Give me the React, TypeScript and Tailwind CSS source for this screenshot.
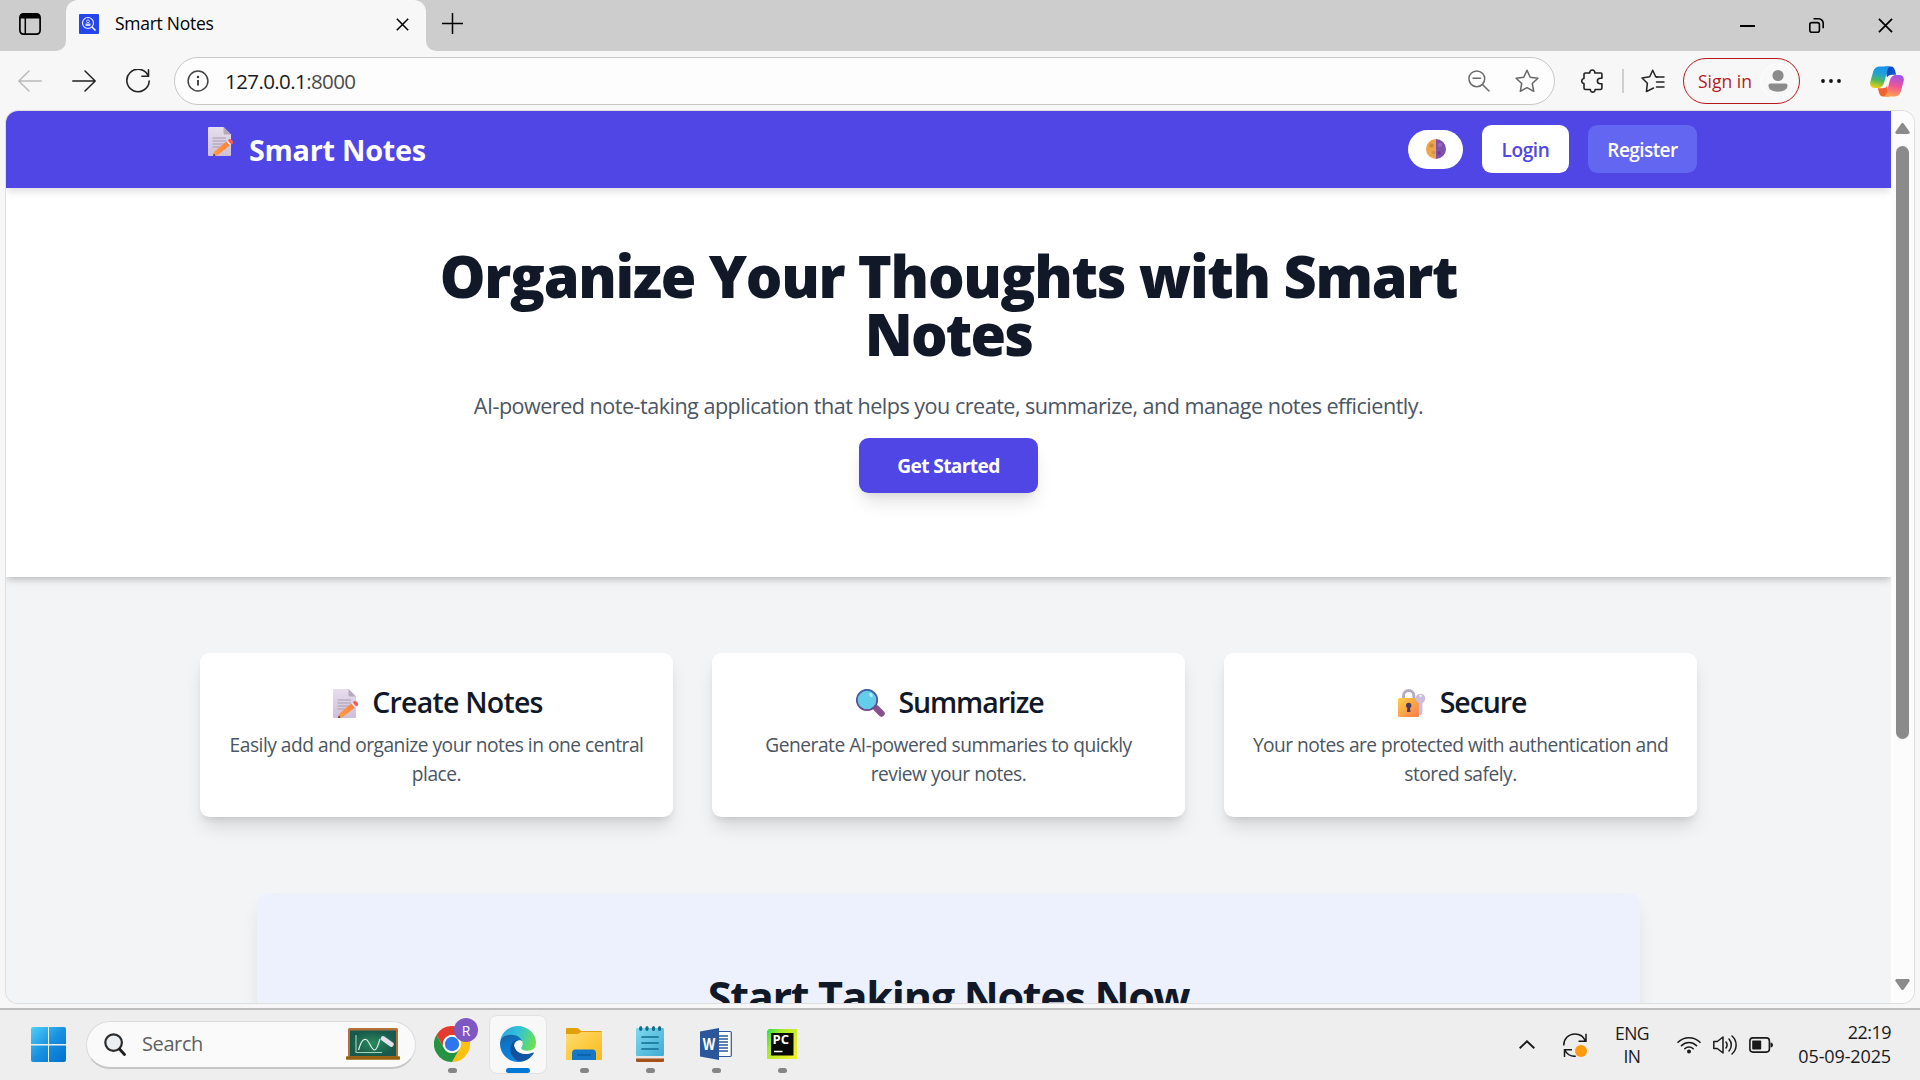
import type { ReactNode } from "react";

type IconProps = { className?: string };

/* ---------- Emoji drawings ---------- */

function MemoEmoji({ className }: IconProps) {
  return (
    <svg viewBox="0 0 26 29" className={className}>
      <defs>
        <linearGradient id="memoPaper" x1="0" y1="0" x2="0" y2="1">
          <stop offset="0" stopColor="#e6dfee" />
          <stop offset="1" stopColor="#cdbfd8" />
        </linearGradient>
        <linearGradient id="memoPencil" x1="1" y1="0" x2="0" y2="1">
          <stop offset="0" stopColor="#ff7d3c" />
          <stop offset="1" stopColor="#ffa044" />
        </linearGradient>
      </defs>
      <path d="M1 0h14.500L23 7.500V28a1 1 0 0 1-1 1H1a1 1 0 0 1-1-1V1a1 1 0 0 1 1-1z" fill="url(#memoPaper)" />
      <path d="M15.500 0 23 7.500h-6a1.500 1.500 0 0 1-1.500-1.500z" fill="#b5a9bb" />
      <path d="M4.500 11h13.500M4.500 14h13.500M4.500 17h12M4.500 20h8" stroke="#a79daf" strokeWidth="1" />
      <path d="m5 29 1.500-4.500L18.300 14.600l3.600 4L9.500 28.300z" fill="url(#memoPencil)" />
      <path d="m18.300 14.600 1.500-1.200 3.500 4-1.400 1.200z" fill="#f3e6ee" />
      <path d="m19.800 13.400 1.400-1.100c1.600-1.200 5 2.300 3.600 3.900l-1.500 1.200z" fill="#fa5a50" />
      <path d="m5 29 .8-2.500 1.800 1.900z" fill="#4d2f4a" />
    </svg>
  );
}

function MagnifierEmoji({ className }: IconProps) {
  return (
    <svg viewBox="0 0 29 28" className={className}>
      <defs>
        <linearGradient id="lensRim" x1="0" y1="0" x2="0" y2="1">
          <stop offset="0" stopColor="#3f62a8" />
          <stop offset="1" stopColor="#6d4586" />
        </linearGradient>
      </defs>
      <path d="m16 16 4 4" stroke="#6d4586" strokeWidth="2.500" />
      <path d="m20.500 19.500 5 5" stroke="#88508d" strokeWidth="6.400" strokeLinecap="round" />
      <circle cx="11" cy="11" r="10.200" fill="#63cdea" stroke="url(#lensRim)" strokeWidth="1.800" />
      <ellipse cx="15" cy="6" rx="1.600" ry="2.200" fill="#b5e9f8" transform="rotate(-30 15 6)" />
    </svg>
  );
}

function LockEmoji({ className }: IconProps) {
  return (
    <svg viewBox="0 0 28 28" className={className}>
      <defs>
        <linearGradient id="lockBody" x1="0" y1="0" x2="1" y2="1">
          <stop offset="0" stopColor="#ffcf45" />
          <stop offset="1" stopColor="#fb7b4c" />
        </linearGradient>
      </defs>
      <path d="M5.500 11V6.700a5.200 5.200 0 0 1 10.400 0V11" fill="none" stroke="#b5acc2" strokeWidth="3" />
      <rect x="0" y="9" width="21" height="19" rx="1.500" fill="url(#lockBody)" />
      <circle cx="22.500" cy="9.500" r="4.800" fill="#cbbddb" />
      <circle cx="22.500" cy="6.800" r="1.100" fill="#fff" />
      <path d="M20.800 13h3.600v12l-2 1.500-1.600-1.500z" fill="#cbbddb" />
      <circle cx="10.700" cy="16.500" r="2.700" fill="#4b3a5c" />
      <path d="M9.600 17h2.200l.7 6H8.900z" fill="#4b3a5c" />
    </svg>
  );
}

function HalfMoon({ className }: IconProps) {
  return (
    <svg viewBox="0 0 20 20" className={className}>
      <path d="M10 0a10 10 0 0 0 0 20z" fill="#eda54a" />
      <path d="M10 0a10 10 0 0 1 0 20z" fill="#8050ae" />
      <circle cx="5.500" cy="6.500" r="2.200" fill="#cf8a43" />
      <circle cx="7.500" cy="13.500" r="1.800" fill="#d8904a" />
      <circle cx="14" cy="6" r="2" fill="#9868c4" />
      <circle cx="13" cy="14" r="1.700" fill="#693e98" />
    </svg>
  );
}

/* ---------- Browser icons ---------- */

function TabActionsIcon() {
  return (
    <svg viewBox="0 0 22 22" className="size-[22px]">
      <rect x=".9" y=".9" width="20.200" height="20.200" rx="3.500" fill="none" stroke="#000" strokeWidth="1.700" />
      <path d="M1 5.500V4a3 3 0 0 1 3-3h14a3 3 0 0 1 3 3v1.500z" />
      <path d="M6.300 5v16" stroke="#000" strokeWidth="1.500" />
    </svg>
  );
}

function Favicon() {
  return (
    <svg viewBox="0 0 20 20" className="size-5">
      <rect width="20" height="20" rx="1" fill="#2446ea" />
      <circle cx="9" cy="9" r="5.500" fill="none" stroke="#e7ecff" strokeWidth="1.200" />
      <path d="m13 13 3.500 3.500" stroke="#fff" strokeWidth="1.600" />
      <circle cx="9" cy="7.300" r="1.400" fill="none" stroke="#cdd8ff" />
      <path d="M6.500 9.500h5v2.500h-5z" fill="#cdd8ff" />
    </svg>
  );
}

function XIcon({ className }: IconProps) {
  return (
    <svg viewBox="0 0 16 16" className={className}>
      <path d="m1 1 14 14M15 1 1 15" stroke="#000" strokeWidth="1.900" />
    </svg>
  );
}

function ArrowIcon({ className }: IconProps) {
  return (
    <svg viewBox="0 0 24 22" className={className} fill="none" stroke="currentColor" strokeWidth="1.500" strokeLinecap="round" strokeLinejoin="round">
      <path d="M.8 11h22.400M13 1l10.200 10L13 21" />
    </svg>
  );
}

function ReloadIcon() {
  return (
    <svg viewBox="0 0 24 24" className="size-6" fill="none" stroke="#222" strokeWidth="1.600" strokeLinecap="round">
      <path d="M22.300 7A11.200 11.200 0 1 0 23.200 12" />
      <path d="M22.500.9v6.300h-6.600" />
    </svg>
  );
}

function InfoIcon() {
  return (
    <svg viewBox="0 0 22 22" className="size-[22px]">
      <circle cx="11" cy="11" r="9.900" fill="none" stroke="#444" strokeWidth="1.500" />
      <path d="M11 10v5.500" stroke="#333" strokeWidth="1.800" />
      <circle cx="11" cy="7" r="1.200" fill="#333" />
    </svg>
  );
}

function ZoomOutIcon() {
  return (
    <svg viewBox="0 0 22 22" className="size-[22px]" fill="none" stroke="#6b6b6b" strokeWidth="1.500" strokeLinecap="round">
      <circle cx="8.800" cy="8.800" r="7.900" />
      <path d="m14.500 14.500 6.500 6.500M5 8.300h7.500" />
    </svg>
  );
}

function StarIcon() {
  return (
    <svg viewBox="0 0 24 24" className="size-6" fill="none" stroke="#666" strokeWidth="1.500" strokeLinejoin="round">
      <path d="m12 1.200 3.200 7 7.700 1-5.600 5.300 1.400 7.800L12 18.600l-6.700 3.700 1.400-7.800L1.100 9.200l7.700-1z" />
    </svg>
  );
}

function PuzzleIcon() {
  return (
    <svg viewBox="0 0 22 24" className="h-6 w-[22px]" fill="none" stroke="#222" strokeWidth="1.600" strokeLinejoin="round">
      <path d="M4.500 4h4.300c-.4-4 5.400-4 5 0h6.100a1 1 0 0 1 1 1v4.300h-1.500c-4 0-4 5.400 0 5.400h1.500V19a1.500 1.500 0 0 1-1.500 1.500h-5.300c.3 3.500-5 3.500-4.700 0h-5A1.500 1.500 0 0 1 3 19v-4.400c-3-.2-3-5 0-5.100V5.500A1.500 1.500 0 0 1 4.500 4z" />
    </svg>
  );
}

function FavoritesIcon() {
  return (
    <svg viewBox="0 0 24 24" className="size-6" fill="none" stroke="#222" strokeWidth="1.500" strokeLinejoin="round" strokeLinecap="round">
      <path d="M16.500 7.900 14.700 7.700 11.700 1.200 8.700 7.700 1 9l5.400 5.200-1 8.400 7.100-3.600" />
      <path d="M15.500 7.900H23M15.500 13H23M15.500 18H23" />
    </svg>
  );
}

function CopilotIcon() {
  return (
    <svg viewBox="0 0 34 30" className="h-[31px] w-[34px]">
      <defs>
        <linearGradient id="cpA" x1=".5" y1="0" x2=".3" y2="1">
          <stop offset="0" stopColor="#1694f0" />
          <stop offset=".35" stopColor="#22a3d0" />
          <stop offset=".65" stopColor="#52b85e" />
          <stop offset="1" stopColor="#f2d00c" />
        </linearGradient>
        <linearGradient id="cpB" x1=".6" y1="0" x2=".4" y2="1">
          <stop offset="0" stopColor="#a052f0" />
          <stop offset=".5" stopColor="#ee5497" />
          <stop offset="1" stopColor="#ffa04e" />
        </linearGradient>
        <linearGradient id="cpC" x1="0" y1="0" x2="1" y2="1">
          <stop offset="0" stopColor="#0c3db5" />
          <stop offset="1" stopColor="#1c60dc" />
        </linearGradient>
      </defs>
      <path d="M15 0h6c2.500 0 3.400 1.800 4 4l1.200 4.200H22c-2.500 0-4 1-5 3z" fill="url(#cpC)" />
      <path d="M19 30h-6c-2.500 0-3.400-1.800-4-4l-1.200-4.200H12c2.500 0 4-1 5-3z" fill="#f4622f" />
      <path d="M10 0h9.500c-1.500 1.500-2 3.500-2.700 6l-2.600 10c-1 3.500-3 5.500-6.200 5.500H4.500c-3 0-5-2.500-4.200-6L3.200 5C4.200 1.700 6.500 0 10 0z" fill="url(#cpA)" />
      <path d="M24 30h-9.500c1.500-1.500 2-3.500 2.700-6l2.600-10c1-3.500 3-5.500 6.200-5.500h3.500c3 0 5 2.500 4.200 6L30.800 25c-1 3.300-3.300 5-6.800 5z" fill="url(#cpB)" />
      <path d="M18.500 9.500c-1 .8-1.500 2-2 4l-1.200 4.500c-.5 1.800-1 2.600-1.900 3.300h1.800c1.200-.5 1.700-1.500 2.200-3.300l1.300-4.800c.5-1.800 1-2.900 2.300-3.700z" fill="#f7f7f7" />
    </svg>
  );
}

/* ---------- Taskbar icons ---------- */

function WindowsIcon() {
  return (
    <svg viewBox="0 0 35 35" className="size-[35px]">
      <defs>
        <linearGradient id="winBlue" x1="0" y1="0" x2="35" y2="35" gradientUnits="userSpaceOnUse">
          <stop offset="0" stopColor="#4fd0fb" />
          <stop offset=".5" stopColor="#1890e0" />
          <stop offset="1" stopColor="#0270cd" />
        </linearGradient>
      </defs>
      <g fill="url(#winBlue)">
        <path d="M2 0h15v17H0V2a2 2 0 0 1 2-2z" />
        <path d="M18 0h15a2 2 0 0 1 2 2v15H18z" />
        <path d="M0 18.500h17V35H2a2 2 0 0 1-2-2z" />
        <path d="M18 18.500h17V33a2 2 0 0 1-2 2H18z" />
      </g>
    </svg>
  );
}

function SearchIcon() {
  return (
    <svg viewBox="0 0 22 23" className="h-[23px] w-[22px]">
      <circle cx="9.600" cy="9.600" r="8.300" fill="#eceff1" stroke="#2b2b2b" strokeWidth="2.200" />
      <path d="m15.500 16 5 5.500" stroke="#1f1f1f" strokeWidth="2.800" strokeLinecap="round" />
    </svg>
  );
}

function ChalkboardIcon() {
  return (
    <svg viewBox="0 0 54 32" className="h-8 w-[54px]">
      <defs>
        <radialGradient id="chalk">
          <stop offset="0" stopColor="#2b8a5c" />
          <stop offset="1" stopColor="#17594c" />
        </radialGradient>
      </defs>
      <rect x="2" y="0" width="50" height="29" rx="1.500" fill="#b56f3c" />
      <rect x="4" y="2.500" width="46" height="25.500" fill="url(#chalk)" />
      <path d="M10 7v17.500h26" fill="none" stroke="#a6d3bd" strokeWidth="1.100" />
      <path d="M12.500 22c3-10 5-11 7.500-10.500 3.500 1 5 10.500 8.500 10.500 3 0 4-7 5.500-11" fill="none" stroke="#e3f2ea" strokeWidth="1.200" />
      <path d="m37 10.500 8.500 6" stroke="#e4e0ec" strokeWidth="4.600" strokeLinecap="round" />
      <rect x="0" y="28.300" width="54" height="3.400" rx=".8" fill="#96600f" />
    </svg>
  );
}

function ChromeIcon() {
  return (
    <svg viewBox="0 0 36 36" className="size-9">
      <path d="M18 9h15.600A18 18 0 0 0 2.400 9l7.800 13.500A9 9 0 0 1 18 9z" fill="#e33b2e" />
      <path d="M33.600 9H18a9 9 0 0 1 7.800 13.500L18 36A18 18 0 0 0 33.600 9z" fill="#fcc010" />
      <path d="M2.400 9l7.800 13.500a9 9 0 0 0 15.600 0L18 36A18 18 0 0 1 2.400 9z" fill="#259341" />
      <circle cx="18" cy="18" r="9" fill="#fff" />
      <circle cx="18" cy="18" r="7.200" fill="#2d76ec" />
    </svg>
  );
}

function EdgeIcon() {
  return (
    <svg viewBox="0 0 36 36" className="size-9">
      <defs>
        <linearGradient id="edgeTop" x1="0" y1=".3" x2="1" y2=".6">
          <stop offset="0" stopColor="#2aa5e2" />
          <stop offset=".45" stopColor="#33c3d8" />
          <stop offset="1" stopColor="#6be14c" />
        </linearGradient>
        <linearGradient id="edgeLeft" x1=".3" y1="0" x2=".5" y2="1">
          <stop offset="0" stopColor="#16639f" />
          <stop offset=".5" stopColor="#0a7bd4" />
          <stop offset="1" stopColor="#0c86e0" />
        </linearGradient>
        <linearGradient id="edgeNavy" x1="0" y1="0" x2="1" y2="1">
          <stop offset="0" stopColor="#0b4a94" />
          <stop offset="1" stopColor="#155aa5" />
        </linearGradient>
      </defs>
      <path d="M0 18C0 11 5 7.500 11 7.500c7 0 11.500 4.500 11.500 8C20 12.500 14 15 14 20l8 15.500A18 18 0 0 1 0 18z" fill="url(#edgeLeft)" />
      <path d="M15.500 14.200C10 17 9 24 12 29.500c2.200 4.200 6.500 6.500 10.500 6C27.500 34.500 31.500 31 33.700 27.500c.4-.9-.4-1.200-1.200-.8C25 30 14.500 27 14 19.500c0-3 1.500-4.700 3.500-5.300z" fill="url(#edgeNavy)" />
      <path d="M.5 13.800C2.300 5.800 9.300 0 18 0c10 0 18 8 18 16.500C36 22 32.500 24.700 28 24.700c-4 0-6.800-1.200-6.800-2.700 0-1 1.500-1.800 1.500-4.500 0-4.500-5-8.700-11.200-8.700-5 0-9 2-11 5z" fill="url(#edgeTop)" />
    </svg>
  );
}

function FolderIcon() {
  return (
    <svg viewBox="0 0 36 33" className="h-[33px] w-9">
      <defs>
        <linearGradient id="folder" x1="0" y1="0" x2="1" y2="1">
          <stop offset="0" stopColor="#ffdc71" />
          <stop offset="1" stopColor="#fab915" />
        </linearGradient>
      </defs>
      <path d="M1 0h10c2 0 3 3 5 3h19a1 1 0 0 1 1 1v10H0V1a1 1 0 0 1 1-1z" fill="#dfa008" />
      <path d="M0 6h11c2 0 3-2 5-2h20v27a1 1 0 0 1-1 1H1a1 1 0 0 1-1-1z" fill="url(#folder)" />
      <path d="M6 32v-7a3.500 3.500 0 0 1 3.500-3.500h17A3.500 3.500 0 0 1 30 25v7z" fill="#1477c8" />
      <path d="M11 27h14" stroke="#0a559a" strokeWidth="1.200" />
    </svg>
  );
}

function NotepadIcon() {
  return (
    <svg viewBox="0 0 28 36" className="h-9 w-7">
      <defs>
        <linearGradient id="pad" x1="0" y1="0" x2="1" y2="1">
          <stop offset="0" stopColor="#7edaf1" />
          <stop offset="1" stopColor="#41abd2" />
        </linearGradient>
      </defs>
      <rect y="30" width="28" height="6" rx="1.300" fill="#a4511b" />
      <rect y="28" width="28" height="4.500" fill="#e9e6e4" />
      <rect y="2" width="28" height="28" rx="1.300" fill="url(#pad)" />
      <g fill="#156d87">
        <ellipse cx="4.700" cy="2.500" rx="1.700" ry="2.500" />
        <ellipse cx="11" cy="2.500" rx="1.700" ry="2.500" />
        <ellipse cx="17.500" cy="2.500" rx="1.700" ry="2.500" />
        <ellipse cx="23.600" cy="2.500" rx="1.700" ry="2.500" />
      </g>
      <path d="M6 11h16M6 17h16M6 23h16" stroke="#106e91" strokeWidth="1.700" strokeLinecap="round" />
    </svg>
  );
}

function WordIcon() {
  return (
    <svg viewBox="0 0 32 32" className="size-8">
      <rect x="16" y="3.500" width="15.300" height="25" rx="1.200" fill="#fff" stroke="#2b579a" strokeWidth="1.200" />
      <path d="M19 8h9M19 11h9M19 14h9M19 17h9M19 20h9M19 23h9" stroke="#2b579a" strokeWidth="1.300" />
      <path d="M0 3.500 19 0v32L0 28.500z" fill="#2b579a" />
      <text x="9" y="22" textAnchor="middle" fontSize="16" className="fill-white font-['Open_Sans',sans-serif] font-bold" textLength="12.500" lengthAdjust="spacingAndGlyphs">W</text>
    </svg>
  );
}

function PyCharmIcon() {
  return (
    <svg viewBox="0 0 30 30" className="size-[30px]">
      <defs>
        <linearGradient id="pyc" x1="0" y1="0" x2="1" y2=".7">
          <stop offset="0" stopColor="#21e04c" />
          <stop offset=".35" stopColor="#a8e82c" />
          <stop offset="1" stopColor="#eef02c" />
        </linearGradient>
      </defs>
      <path d="M2 0h28v30H0V2z" fill="url(#pyc)" />
      <rect x="4" y="4" width="22.500" height="22.500" fill="#050a05" />
      <text x="5.500" y="15" fontSize="12" className="fill-white font-['Open_Sans',sans-serif] font-bold" textLength="16.500" lengthAdjust="spacingAndGlyphs">PC</text>
      <path d="M7 22.500h8.500" stroke="#fff" strokeWidth="1.500" />
    </svg>
  );
}

function SyncIcon() {
  return (
    <svg viewBox="0 0 24 24" className="size-6" fill="none" stroke="#1a1a1a" strokeWidth="1.500">
      <path d="M.8 12.500C.5 6 5.500 .9 12 .9c4.800 0 8.700 2.800 10.500 7M23 .8v7.400h-7.500" />
      <path d="M1.500 24v-7.300H9M1.800 17c2 4.200 6 6.500 11 6.300" />
      <circle cx="18" cy="18" r="6" fill="#ff9a0c" stroke="none" />
    </svg>
  );
}

function WifiIcon() {
  return (
    <svg viewBox="0 0 24 18" className="h-[18px] w-6" fill="none" stroke="#1a1a1a" strokeWidth="1.600" strokeLinecap="round">
      <path d="M1 6.300a15.500 15.500 0 0 1 22 0M4.500 9.600a10.600 10.600 0 0 1 15 0M7.800 12.700a6 6 0 0 1 8.400 0" />
      <circle cx="12" cy="15.500" r="2" fill="#1a1a1a" stroke="none" />
    </svg>
  );
}

function SoundIcon() {
  return (
    <svg viewBox="0 0 24 20" className="h-5 w-6" fill="none" stroke="#1a1a1a" strokeWidth="1.500" strokeLinejoin="round" strokeLinecap="round">
      <path d="M.8 6.500h3.500L10 2v16l-5.700-4.500H.8zM13 7a5 5 0 0 1 0 6M16 4a9 9 0 0 1 0 12M19 1c5.500 5 5.500 13 0 18" />
    </svg>
  );
}

function BatteryIcon() {
  return (
    <svg viewBox="0 0 24 16" className="h-4 w-6">
      <rect x=".9" y=".9" width="19.500" height="14.200" rx="3" fill="none" stroke="#1a1a1a" strokeWidth="1.600" />
      <rect x="3.200" y="3.500" width="9" height="9" rx=".8" fill="#1a1a1a" />
      <path d="M21.500 5.500c1.500 0 2.500 1 2.500 2.500s-1 2.500-2.500 2.500z" fill="#1a1a1a" />
    </svg>
  );
}

/* ---------- Browser chrome ---------- */

function TabStrip() {
  return (
    <div className="flex h-[51px] shrink-0 bg-[#cdcdcd]">
      <div className="flex w-[66px] items-start bg-[#f7f7f7]">
        <div className="flex h-full w-full items-center rounded-br-[10px] bg-[#cdcdcd] pb-[3px] pl-[19px]">
          <TabActionsIcon />
        </div>
      </div>
      <div className="w-[360px] bg-[#cdcdcd]">
        <div className="flex h-full items-center rounded-t-xl bg-[#f7f7f7] pb-[3px] pl-[13px] pr-[17px]">
          <Favicon />
          <span className="mb-px ml-4 text-[17.500px] tracking-[-0.016em] text-black">Smart Notes</span>
          <XIcon className="ml-auto mt-px size-[13px]" />
        </div>
      </div>
      <div className="flex flex-1 bg-[#f7f7f7]">
        <div className="flex flex-1 items-center rounded-bl-[10px] bg-[#cdcdcd] pb-1 pl-4 pr-[27px]">
          <svg viewBox="0 0 21 21" className="size-[21px]">
            <path d="M10.500 0v21M0 10.500h21" stroke="#000" strokeWidth="1.500" />
          </svg>
          <div className="ml-auto flex items-center gap-[54px] pt-1">
            <svg viewBox="0 0 15 2" className="h-0.5 w-[15px]">
              <path d="M0 1h15" stroke="#000" strokeWidth="2" />
            </svg>
            <svg viewBox="0 0 15 15" className="size-[15px]" fill="none" stroke="#000" strokeWidth="1.600">
              <rect x=".8" y="4.600" width="9.600" height="9.600" rx="2" />
              <path d="M4.500.8h5.200a4.500 4.500 0 0 1 4.500 4.500v5" />
            </svg>
            <XIcon className="size-[15px]" />
          </div>
        </div>
      </div>
    </div>
  );
}

function Toolbar() {
  return (
    <div className="flex h-[60px] shrink-0 items-center pl-[18px] pr-4">
      <ArrowIcon className="h-[22px] w-6 rotate-180 text-[#b9b9b9]" />
      <ArrowIcon className="ml-[30px] h-[22px] w-6 text-[#222]" />
      <div className="ml-[30px]">
        <ReloadIcon />
      </div>
      <div className="ml-6 flex h-12 w-[1381px] items-center rounded-full border border-[#c8c8c8] bg-[#fdfdfd] pl-3 pr-[15px]">
        <InfoIcon />
        <span className="ml-4 text-[20.500px] tracking-[-0.029em] text-[#1b1b1b]">
          127.0.0.1<span className="text-[#4a4a4a]">:8000</span>
        </span>
        <div className="ml-auto flex items-center gap-[25px]">
          <ZoomOutIcon />
          <StarIcon />
        </div>
      </div>
      <div className="ml-[26px]">
        <PuzzleIcon />
      </div>
      <div className="ml-[19px] h-6 w-0.5 bg-[#cfcfcf]" />
      <div className="ml-[17px]">
        <FavoritesIcon />
      </div>
      <div className="ml-[18px] flex h-[46px] w-[117px] items-center justify-between rounded-full border-[1.500px] border-[#b5191e] pl-[14px] pr-[3px]">
        <span className="text-[17.500px] tracking-[0em] text-[#b5191e]">Sign in</span>
        <svg viewBox="0 0 36 36" className="size-9 shrink-0">
          <circle cx="18" cy="18" r="17" fill="#f8f8f8" stroke="#fff" />
          <circle cx="18" cy="12.500" r="5.600" fill="#8b8b8b" />
          <path d="M10.500 20.500h15c1.200 0 2 .8 2 2 0 4-4 6.200-9.500 6.200s-9.500-2.200-9.500-6.200c0-1.200.8-2 2-2z" fill="#8b8b8b" />
        </svg>
      </div>
      <svg viewBox="0 0 20 4" className="ml-[21px] h-1 w-5" fill="#111">
        <circle cx="2" cy="2" r="1.900" />
        <circle cx="10" cy="2" r="1.900" />
        <circle cx="18" cy="2" r="1.900" />
      </svg>
      <div className="ml-auto">
        <CopilotIcon />
      </div>
    </div>
  );
}

function ScrollBar() {
  return (
    <div className="flex w-[23px] shrink-0 flex-col items-center bg-[#fcfcfc] pb-[13px] pt-3">
      <svg viewBox="0 0 15 11" className="h-[11px] w-[15px]" fill="#8b8b8b">
        <path d="M6.200.8a1.600 1.600 0 0 1 2.600 0l5.700 8c.6 1-.1 2.200-1.300 2.200H1.800C.6 11-.1 9.800.5 8.800z" />
      </svg>
      <div className="mt-3 h-[593px] w-[13px] rounded-full bg-[#8b8b8b]" />
      <svg viewBox="0 0 15 11" className="mt-auto h-[11px] w-[15px] rotate-180" fill="#8b8b8b">
        <path d="M6.200.8a1.600 1.600 0 0 1 2.600 0l5.700 8c.6 1-.1 2.200-1.300 2.200H1.800C.6 11-.1 9.800.5 8.800z" />
      </svg>
    </div>
  );
}

/* ---------- Web page ---------- */

function NavBar() {
  return (
    <nav className="z-10 flex h-[77px] shrink-0 justify-center bg-[#4f46e5] shadow-[0_5px_7px_-1px_rgba(0,0,0,0.12)]">
      <div className="flex w-[1497px] items-center justify-between">
        <div className="flex items-center pl-2">
          <MemoEmoji className="mb-4 h-[29px] w-[26px]" />
          <span className="ml-[15px] text-[28.800px] font-bold tracking-[-0.009em] text-white">Smart Notes</span>
        </div>
        <div className="flex items-center gap-[19px] pb-px">
          <button className="flex h-[39px] w-[55px] items-center justify-center rounded-full bg-white">
            <HalfMoon className="size-5" />
          </button>
          <button className="h-12 w-[87px] rounded-[9.600px] bg-white pt-[3px] text-[19px] font-semibold tracking-[-0.020em] text-[#4f46e5]">Login</button>
          <button className="h-12 w-[109px] rounded-[9.600px] bg-[#6366f1] pt-[3px] text-[19px] font-semibold tracking-[-0.030em] text-white">Register</button>
        </div>
      </div>
    </nav>
  );
}

function Hero() {
  return (
    <section className="z-[5] flex h-[389px] shrink-0 flex-col items-center bg-white pt-[59px] text-center shadow-[0_5px_7px_-1px_rgba(0,0,0,0.14),0_2px_5px_-1px_rgba(0,0,0,0.1)]">
      <h1 className="w-[1075px] text-[57.600px] font-extrabold leading-[57.600px] tracking-[-0.0225em] text-[#111827]">
        Organize Your Thoughts with Smart <span className="tracking-[-0.032em]">Notes</span>
      </h1>
      <p className="mt-[27px] text-[21.600px] leading-[34px] tracking-[-0.024em] text-[#4b5563]">
        AI-powered note-taking application that helps you create, summarize, and manage notes efficiently.
      </p>
      <button className="mt-[15px] h-[55px] w-[179px] rounded-[9.600px] bg-[#4f46e5] pt-0.5 text-[19.200px] font-bold tracking-[-0.034em] text-white shadow-[0_12px_18px_-3.600px_rgba(0,0,0,0.12),0_5px_7px_-3px_rgba(0,0,0,0.06)]">
        Get Started
      </button>
    </section>
  );
}

function FeatureCard({ icon, title, children }: { icon: ReactNode; title: ReactNode; children: ReactNode }) {
  return (
    <article className="flex h-[164px] w-[473px] flex-col items-center rounded-[9.600px] bg-white pt-[30px] text-center shadow-[0_12px_18px_-3.600px_rgba(0,0,0,0.12),0_5px_7px_-3px_rgba(0,0,0,0.1)]">
      <h2 className="flex h-[38px] items-center pl-[3px] text-[28.500px] font-semibold tracking-[-0.038em] text-[#111827]">
        {icon}
        {title}
      </h2>
      <p className="mt-[9px] text-[19.200px] leading-[29px] tracking-[-0.026em] text-[#4b5563]">{children}</p>
    </article>
  );
}

function WebPage() {
  return (
    <div className="flex min-w-0 flex-1 flex-col overflow-hidden bg-[#f3f4f6]">
      <NavBar />
      <Hero />
      <section className="mt-[76px] flex shrink-0 justify-center gap-[39px]">
        <FeatureCard
          icon={<MemoEmoji className="mr-[13px] mt-0.5 h-[29px] w-[26px]" />}
          title={<span className="tracking-[-0.027em]">Create Notes</span>}
        >
          Easily add and organize your notes in one central
          <br />
          place.
        </FeatureCard>
        <FeatureCard icon={<MagnifierEmoji className="mr-[13px] mt-px h-[28px] w-[29px]" />} title="Summarize">
          Generate AI-powered summaries to quickly
          <br />
          review your notes.
        </FeatureCard>
        <FeatureCard icon={<LockEmoji className="mr-[14px] mt-px size-[28px]" />} title="Secure">
          <span className="tracking-[-0.028em]">Your notes are protected with authentication and</span>
          <br />
          stored safely.
        </FeatureCard>
      </section>
      <section className="mt-[76px] h-[300px] w-[1383px] shrink-0 self-center rounded-[12px] bg-[#edf1fe] pt-[79px] text-center shadow-[0_12px_18px_-3.600px_rgba(0,0,0,0.1)]">
        <h2 className="text-[43.200px] font-bold leading-[50px] tracking-[-0.031em] text-[#111827]">Start Taking Notes Now</h2>
      </section>
    </div>
  );
}

/* ---------- Taskbar ---------- */

function AppSlot({ children, active = false }: { children: ReactNode; active?: boolean }) {
  return (
    <div className="flex w-[66px] justify-center">
      <div
        className={
          active
            ? "relative flex h-[59px] w-[58px] items-center justify-center rounded-lg border border-[#e2e2e2] bg-[#f8f8f8] pb-px"
            : "relative flex h-[59px] w-[58px] items-center justify-center pb-px"
        }
      >
        {children}
        <span
          className={
            active
              ? "absolute bottom-0 h-[5px] w-6 rounded-full bg-[#0078d7]"
              : "absolute bottom-px h-[5px] w-[9px] rounded-full bg-[#858585]"
          }
        />
      </div>
    </div>
  );
}

function Taskbar() {
  return (
    <footer className="flex h-[72px] shrink-0 items-center border-t-2 border-[#bdbdbd] bg-[#eeeeee] pb-px pl-[31px] pr-[29px]">
      <WindowsIcon />
      <div className="ml-5 flex h-12 w-[330px] items-center rounded-full border border-b-2 border-[#dcdcdc] border-b-[#c6c6c6] bg-[#fafafa] pl-[17px] pr-[15px]">
        <SearchIcon />
        <span className="ml-4 text-[20px] tracking-[-0.020em] text-[#606060]">Search</span>
        <div className="ml-auto">
          <ChalkboardIcon />
        </div>
      </div>
      <div className="ml-[3px] flex">
        <AppSlot>
          <ChromeIcon />
          <span className="absolute right-[3px] top-[3px] flex size-6 items-center justify-center rounded-full bg-[#7e57c2] text-[14px] text-white">R</span>
        </AppSlot>
        <AppSlot active>
          <EdgeIcon />
        </AppSlot>
        <AppSlot>
          <FolderIcon />
        </AppSlot>
        <AppSlot>
          <NotepadIcon />
        </AppSlot>
        <AppSlot>
          <WordIcon />
        </AppSlot>
        <AppSlot>
          <PyCharmIcon />
        </AppSlot>
      </div>
      <div className="ml-auto flex items-center text-[#1a1a1a]">
        <svg viewBox="0 0 16 9" className="h-[9px] w-4" fill="none" stroke="#1a1a1a" strokeWidth="1.900">
          <path d="m.7 8.300 7.300-7 7.300 7" />
        </svg>
        <div className="ml-7">
          <SyncIcon />
        </div>
        <div className="ml-[27px] w-9 text-center text-[17.500px] leading-[23px] tracking-[-0.035em]">
          <div>ENG</div>
          <div>IN</div>
        </div>
        <div className="ml-[27px] flex items-center gap-3">
          <WifiIcon />
          <SoundIcon />
          <BatteryIcon />
        </div>
        <div className="mb-px ml-6 w-[94px] text-right text-[18px] leading-6 tracking-[-0.007em]">
          <div className="tracking-[-0.030em]">22:19</div>
          <div>05-09-2025</div>
        </div>
      </div>
    </footer>
  );
}

export default function App() {
  return (
    <div className="flex h-[1080px] w-[1920px] flex-col overflow-hidden bg-[#f7f7f7] font-['Open_Sans','Noto_Sans',sans-serif]">
      <TabStrip />
      <Toolbar />
      <main className="mb-[5px] ml-[6px] mr-[6px] flex min-h-0 flex-1 overflow-hidden rounded-xl shadow-[0_0_0_1px_#dedede]">
        <WebPage />
        <ScrollBar />
      </main>
      <Taskbar />
    </div>
  );
}
